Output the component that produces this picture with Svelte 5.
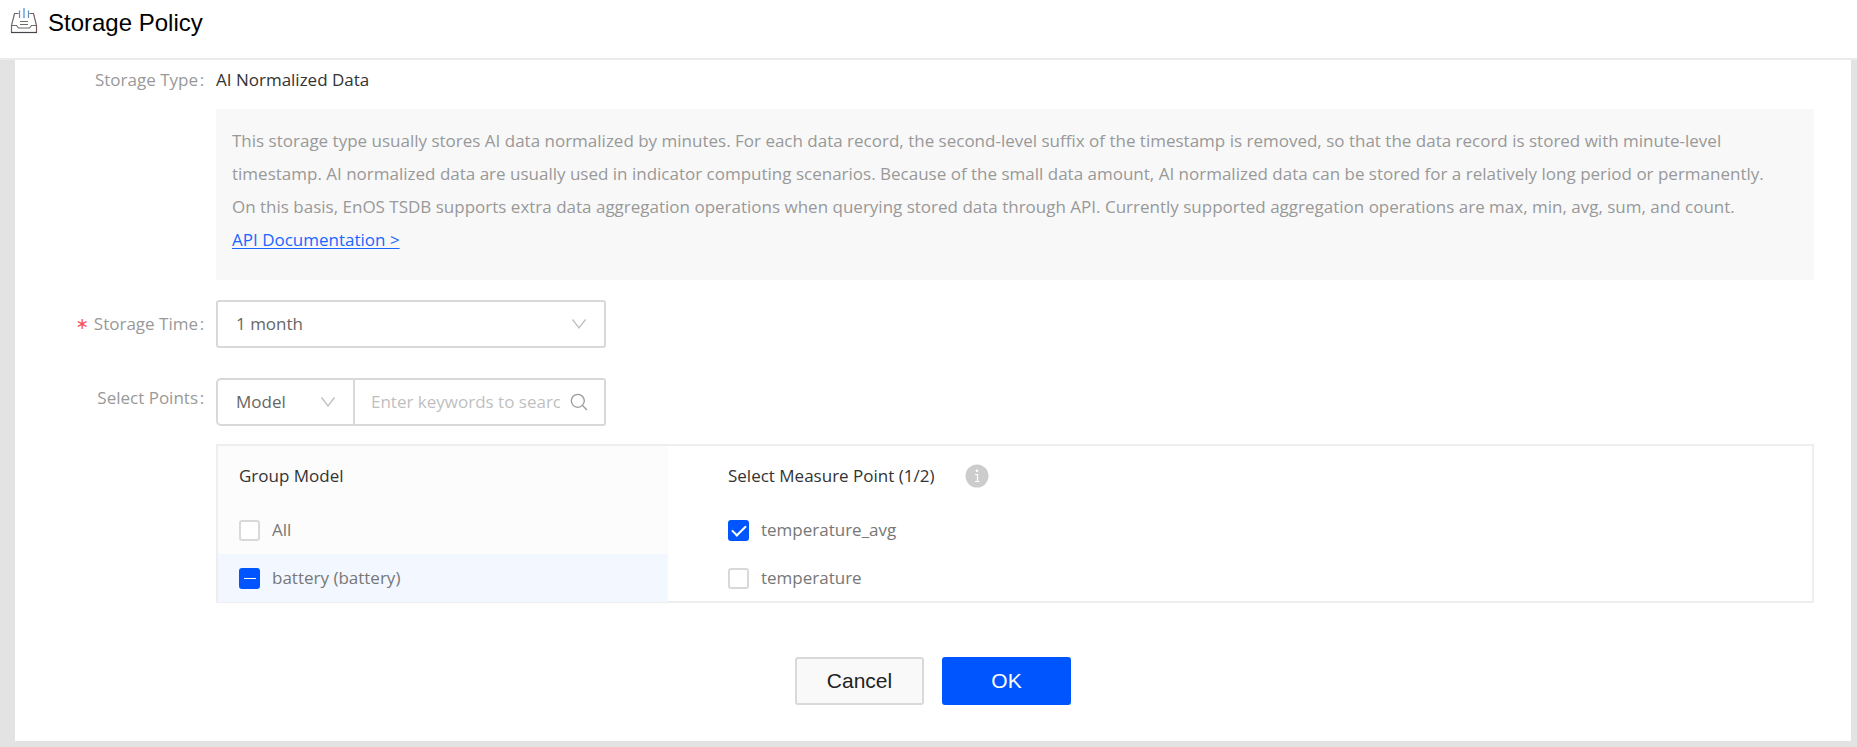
<script>
  let storageTime = $state('1 month');
  let scope = $state('Model');
  let keyword = $state('');
  let points = $state([
    { name: 'temperature_avg', checked: true },
    { name: 'temperature', checked: false }
  ]);

  let selected = $derived(points.filter((p) => p.checked).length);
  let allChecked = $derived(selected === points.length);
  let partial = $derived(selected > 0 && !allChecked);

  function toggleBattery() {
    const next = !allChecked;
    points.forEach((p) => (p.checked = next));
  }
</script>

{#snippet chevron()}
  <svg class="chevron" viewBox="0 0 16 16" width="16" height="16" aria-hidden="true">
    <path d="M1.500 3.500 8 12l6.500-8.500" fill="none" stroke="#bfbfbf" stroke-width="1.300" />
  </svg>
{/snippet}

<div class="page">
  <header>
    <svg class="logo" viewBox="0 0 28 26" width="28" height="26" fill="none" aria-hidden="true">
      <path d="M8.500 5.500H4.500L1.500 17.500V24.500" stroke="#6b6a72" stroke-width="1.200" />
      <path d="M19.500 5.500H23.500L26.500 17.500V24.500" stroke="#7a5a5a" stroke-width="1.200" />
      <path d="M1 24.500H27" stroke="#44444a" stroke-width="1.200" />
      <path d="M1.500 17.500H6.500L8.500 20H19.500L21.500 17.500H26.500" stroke="#6b6b70" stroke-width="1.200" />
      <path d="M10 13.500H18M10 16.500H18" stroke="#6b6b70" stroke-width="1.100" />
      <path d="M9.500 2.500V10M18.500 2.500V10" stroke="#5f8fb8" stroke-width="1.200" />
      <path d="M14 0V10" stroke="#3f8fd8" stroke-width="1.200" />
    </svg>
    <h1>Storage Policy</h1>
  </header>

  <main>
    <form onsubmit={(e) => e.preventDefault()}>
      <div class="row type">
        <span class="label">Storage Type<i>:</i></span>
        <span class="value">AI Normalized Data</span>
      </div>

      <div class="note">
        <p>
          This storage type usually stores AI data normalized by minutes. For each data record, the
          second-level suffix of the timestamp is removed, so that the data record is stored with
          minute-level timestamp. AI normalized data are usually used in indicator computing
          scenarios. Because of the small data amount, AI normalized data can be stored for a
          relatively long period or permanently. On this basis, EnOS TSDB supports extra data
          aggregation operations when querying stored data through API. Currently supported
          aggregation operations are max, min, avg, sum, and count.
        </p>
        <a href="#api">API Documentation &gt;</a>
      </div>

      <div class="row time">
        <label class="label" for="time"><b>∗</b>Storage Time<i>:</i></label>
        <div class="select box">
          <select id="time" bind:value={storageTime}>
            <option>1 month</option>
            <option>3 months</option>
            <option>6 months</option>
            <option>1 year</option>
          </select>
          {@render chevron()}
        </div>
      </div>

      <div class="row points">
        <label class="label" for="keyword">Select Points<i>:</i></label>
        <div class="box group">
          <div class="select scope">
            <select aria-label="Search scope" bind:value={scope}>
              <option>Model</option>
              <option>Point</option>
            </select>
            {@render chevron()}
          </div>
          <div class="search">
            <input id="keyword" type="text" placeholder="Enter keywords to search" bind:value={keyword} />
            <button type="button" class="find" aria-label="Search">
              <svg viewBox="0 0 18 18" width="18" height="18" fill="none" stroke="#999" stroke-width="1.300">
                <circle cx="7.800" cy="7.800" r="6.500" />
                <path d="m12.500 12.500 4.500 4.500" />
              </svg>
            </button>
          </div>
        </div>
      </div>

      <div class="picker">
        <section class="models">
          <h2>Group Model</h2>
          <label class="item"><input type="checkbox" />All</label>
          <label class="item active">
            <input type="checkbox" checked={allChecked} indeterminate={partial} onchange={toggleBattery} />battery
            (battery)
          </label>
        </section>
        <section class="measures">
          <h2>
            Select Measure Point ({selected}/{points.length})
            <svg viewBox="0 0 24 24" width="24" height="24" aria-hidden="true">
              <circle cx="12" cy="12" r="11.500" fill="#ccc" />
              <path d="M10 10.500h2.500v7M10 17.500h4.500" fill="none" stroke="#fff" stroke-width="1.200" />
              <circle cx="12" cy="6.800" r="1.300" fill="#fff" />
            </svg>
          </h2>
          {#each points as point}
            <label class="item"><input type="checkbox" bind:checked={point.checked} />{point.name}</label>
          {/each}
        </section>
      </div>

      <div class="actions">
        <button type="button" class="cancel">Cancel</button>
        <button type="submit" class="ok">OK</button>
      </div>
    </form>
  </main>
</div>

<style>
  :global(body) {
    margin: 0;
  }

  .page {
    box-sizing: border-box;
    min-height: 100vh;
    display: flex;
    flex-direction: column;
    background: #e3e3e3;
    color: #333;
    font: 400 17px/24px 'Open Sans', sans-serif;
  }

  .page * {
    box-sizing: border-box;
  }

  header {
    display: flex;
    align-items: flex-start;
    gap: 10px;
    height: 60px;
    padding: 8px 10px;
    background: #fff;
    border-bottom: 2px solid #ebebeb;
  }

  h1 {
    margin: 0;
    color: #000;
    font: 400 24px/30px 'Liberation Sans', Arial, sans-serif;
  }

  main {
    flex: 1;
    margin: 0 6px 6px 15px;
    padding: 8px 37px 36px 0;
    background: #fff;
  }

  .row {
    display: flex;
  }

  .label {
    flex: none;
    display: flex;
    justify-content: flex-end;
    width: 201px;
    padding-right: 10px;
    color: #999;
  }

  .label i {
    width: 8px;
    font-style: normal;
    text-align: center;
  }

  .label b {
    margin-right: 5px;
    color: #f5545c;
    font: 400 16px/24px 'DejaVu Sans', sans-serif;
  }

  .note {
    margin: 17px 0 20px 201px;
    padding: 15px 32px 24px 16px;
    background: #f8f8f8;
    color: #999;
    line-height: 33px;
  }

  .note p {
    margin: 0;
  }

  .note a {
    color: #1a66ff;
    text-underline-offset: 2px;
  }

  .time .label {
    padding-top: 12px;
  }

  .points .label {
    padding-top: 8px;
  }

  .box {
    width: 390px;
    height: 48px;
    border: 2px solid #d9d9d9;
    border-radius: 3px;
  }

  .select {
    display: grid;
    align-items: center;
  }

  .select > :global(*) {
    grid-area: 1 / 1;
  }

  select {
    width: 100%;
    height: 44px;
    padding: 0 40px 0 18px;
    appearance: none;
    border: 0;
    background: none;
    color: #666;
    font: inherit;
  }

  .chevron {
    justify-self: end;
    margin-right: 17px;
    pointer-events: none;
  }

  .points {
    margin-top: 30px;
  }

  .group {
    display: flex;
    border-radius: 5px 3px 3px 5px;
  }

  .scope {
    width: 137px;
    border-right: 2px solid #d9d9d9;
  }

  .search {
    flex: 1;
    min-width: 0;
    display: flex;
    align-items: center;
    padding: 0 16px;
    gap: 10px;
  }

  .search input {
    flex: 1;
    min-width: 0;
    padding: 0;
    border: 0;
    outline: 0;
    background: none;
    color: #666;
    font: inherit;
  }

  .search input::placeholder {
    color: #bfbfbf;
  }

  .find {
    display: flex;
    padding: 0;
    border: 0;
    background: none;
  }

  .picker {
    display: flex;
    margin: 18px 0 0 201px;
    border: 2px solid #eee;
  }

  /* the last row overlaps the frame by one pixel */
  .picker section {
    margin-bottom: -1px;
  }

  .models {
    width: 450px;
    background: #fcfcfc;
  }

  .measures {
    flex: 1;
    padding-left: 39px;
  }

  h2 {
    display: flex;
    align-items: center;
    gap: 31px;
    height: 60px;
    margin: 0;
    padding-left: 21px;
    color: #333;
    font: inherit;
  }

  .item {
    display: flex;
    align-items: center;
    gap: 12px;
    height: 48px;
    padding-left: 21px;
    color: #777;
  }

  .active {
    background: #f3f7ff;
  }

  .item input {
    flex: none;
    display: grid;
    place-items: center;
    width: 21px;
    height: 21px;
    margin: 0;
    appearance: none;
    background: #fff;
    border: 2px solid #d9d9d9;
    border-radius: 3px;
  }

  .item input:checked,
  .item input:indeterminate {
    background: #0055ff;
    border-color: #0055ff;
  }

  .item input:checked::after {
    content: '';
    width: 6px;
    height: 12px;
    margin-bottom: 4px;
    border: solid #fff;
    border-width: 0 2px 2px 0;
    transform: rotate(45deg);
  }

  .item input:indeterminate::after {
    content: '';
    width: 12px;
    height: 1px;
    margin: 0;
    border: 0;
    background: #fff;
    transform: none;
  }

  .actions {
    display: flex;
    justify-content: center;
    gap: 18px;
    margin-top: 54px;
    padding-left: 37px;
  }

  .actions button {
    width: 129px;
    height: 48px;
    padding: 0;
    border: 2px solid #d9d9d9;
    border-radius: 3px;
    background: #f9f9f9;
    color: #222;
    font: 400 21px/24px 'Liberation Sans', Arial, sans-serif;
  }

  .actions .ok {
    border-color: #0055ff;
    background: #0055ff;
    color: #fff;
  }
</style>
